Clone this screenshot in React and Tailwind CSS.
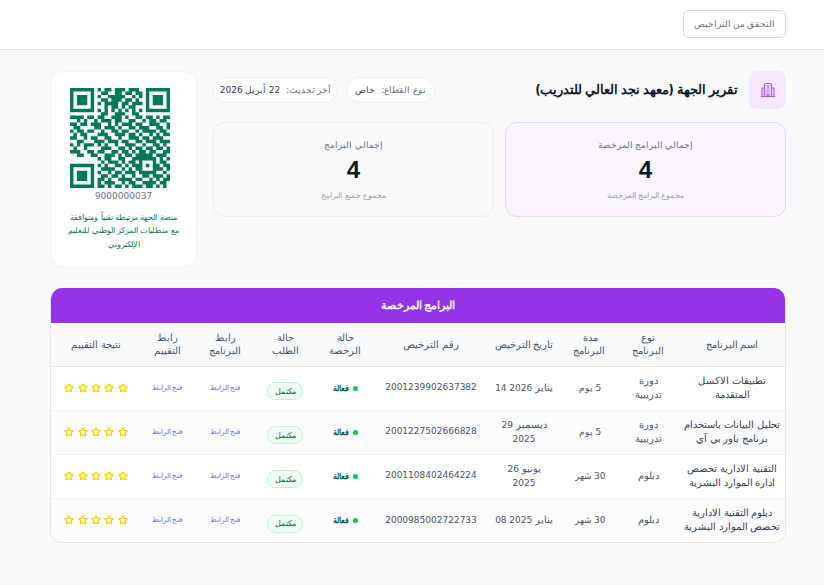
import { Star } from 'lucide-react';

const qrRows = [
    '00000000101101110111000000000',
    '00000000011001101101100000000',
    '00000000100111110010100000000',
    '00000000011011101101000000000',
    '00000000101111011011100000000',
    '00000000001011010110000000000',
    '00000000101010101010100000000',
    '00000000011001110011000000000',
    '11110110110011101001101101011',
    '00101001011101100110010110110',
    '11011011100101011101100111001',
    '01100001101110100110111001101',
    '10110110010011011001011110110',
    '01011000111001110110100101011',
    '11001011001100100111011011100',
    '00110001110111011001101110111',
    '10101110101001001110010011010',
    '01001000011100110101101101101',
    '11100110110011011010110110011',
    '00110011001110101101111101110',
    '00000000101100110011111110101',
    '00000000010111010110100010110',
    '00000000101001101011101011011',
    '00000000011110010101100011101',
    '00000000100101101110111110010',
    '00000000011011010010011011101',
    '00000000110100111101100101011',
    '00000000101110010110011110110',
    '00000000110101101011101101010',
];

const finder = (x, y) =>
    `M${x} ${y}h7v7h-7zM${x + 1} ${y + 1}v5h5v-5zM${x + 2} ${y + 2}h3v3h-3z`;

function QrCode() {
    let d = finder(0, 0) + finder(22, 0) + finder(0, 22);
    qrRows.forEach((row, y) => {
        row.split('').forEach((c, x) => {
            if (c === '1') d += `M${x} ${y}h1v1h-1z`;
        });
    });
    return (
        <svg viewBox="0 0 29 29" className="w-[100px] h-[100px] mr-[8px] shrink-0" fillRule="evenodd">
            <path d={d} fill="#047857" />
        </svg>
    );
}

// digits sit in a wider face than the arabic text
function Txt({ children }) {
    return children.split(/(\d+)/).map((part, i) =>
        /\d/.test(part) ? (
            <span key={i} className="font-['DejaVu_Sans',sans-serif] text-[9px]">{part}</span>
        ) : (
            part
        )
    );
}

const programs = [
    {
        name: 'تطبيقات الاكسل المتقدمة',
        type: 'دورة تدريبية',
        duration: '5 يوم',
        date: 'يناير 2026 14',
        number: '2001239902637382',
    },
    {
        name: 'تحليل البيانات باستخدام برنامج باور بي آي',
        type: 'دورة تدريبية',
        duration: '5 يوم',
        date: 'ديسمبر 29\n2025',
        number: '2001227502666828',
    },
    {
        name: 'التقنية الادارية تخصص ادارة الموارد البشرية',
        type: 'دبلوم',
        duration: '30 شهر',
        date: 'يونيو 26\n2025',
        number: '2001108402464224',
    },
    {
        name: 'دبلوم التقنية الادارية تخصص الموارد البشرية',
        type: 'دبلوم',
        duration: '30 شهر',
        date: 'يناير 2025 08',
        number: '2000985002722733',
    },
];

const headers = [
    ['اسم البرنامج', 'w-[106px] px-3'],
    ['نوع البرنامج', 'w-[62px] px-3'],
    ['مدة البرنامج', 'w-[54px] px-3'],
    ['تاريخ الترخيص', 'w-[78px] px-1'],
    ['رقم الترخيص', 'w-[108px] px-3'],
    ['حالة الرخصة', 'w-[64px] px-3'],
    ['حالة الطلب', 'w-[56px] px-3'],
    ['رابط البرنامج', 'w-[64px] px-3'],
    ['رابط التقييم', 'w-[52px] px-3'],
    ['نتيجة التقييم', 'w-[90px] px-3'],
];

function StatCard({ title, note, purple }) {
    return (
        <div
            className={`flex-1 h-[95px] rounded-xl border flex flex-col items-center pt-[15px] ${
                purple ? 'bg-[#faf5ff] border-[#e9d5ff]' : 'bg-[#f9fafb] border-[#eceef2]'
            }`}
        >
            <div className="text-[8.5px] leading-[14px] text-gray-500">{title}</div>
            <div className="text-[24px] leading-[32px] font-bold text-gray-900 font-['Liberation_Sans',sans-serif] mt-[2px]">4</div>
            <div className="text-[7.5px] leading-[12px] text-gray-400 mt-[4px]">{note}</div>
        </div>
    );
}

function App() {
    return (
        <div dir="rtl" className="min-h-screen bg-[#f9fafb] font-['Inter',sans-serif]">
            <div className="h-[50px] bg-white border-b border-[#e5e7eb] flex items-start pt-[10px] pr-[38px]">
                <button className="w-[103px] h-[28px] border border-gray-300 rounded-md text-[8.5px] text-gray-500 bg-white">
                    التحقق من التراخيص
                </button>
            </div>

            <div className="pr-[38px] pl-[50px] pt-[21px]">
                <div className="flex gap-4">
                    <div className="flex-1 min-w-0">
                        <div className="flex items-center justify-between h-[38px] mb-[13px]">
                            <div className="flex items-center gap-[11px]">
                                <div className="w-[37px] h-[38px] rounded-lg bg-[#f3e8ff] flex items-center justify-center">
                                    <svg viewBox="0 0 16 16" className="w-[16px] h-[16px]" fill="none" stroke="#a855f7" strokeWidth="1.2">
                                        <path d="M4.5 14V2.5L6 1.5h4l1.5 1V14" />
                                        <path d="M4.5 6H2v8M11.5 6H14v8M.8 14.5h14.4" />
                                        <path d="M6.5 4h3M6.5 6h3M6.5 8h3M6.5 10h3M7 14v-2h2v2" />
                                    </svg>
                                </div>
                                <h1 className="text-[12.8px] font-bold text-gray-900">تقرير الجهة (معهد نجد العالي للتدريب)</h1>
                            </div>
                            <div className="flex gap-2">
                                <div className="h-[26px] w-[89px] rounded-full bg-white border border-[#eef0f3] flex items-center justify-center gap-[6px] text-[9px]">
                                    <span className="text-gray-500">نوع القطاع:</span>
                                    <span className="text-gray-700">خاص</span>
                                </div>
                                <div className="h-[26px] w-[125px] rounded-full bg-white border border-[#eef0f3] flex items-center justify-center gap-[6px] text-[9px]">
                                    <span className="text-gray-500">آخر تحديث:</span>
                                    <span className="text-gray-700"><Txt>22 أبريل 2026</Txt></span>
                                </div>
                            </div>
                        </div>
                        <div className="flex gap-[11px]">
                            <StatCard title="إجمالي البرامج المرخصة" note="مجموع البرامج المرخصة" purple />
                            <StatCard title="إجمالي البرامج" note="مجموع جميع البرامج" />
                        </div>
                    </div>

                    <div className="w-[147px] h-[196px] bg-white rounded-xl border border-gray-100 flex flex-col items-center pt-[16px] px-4">
                        <QrCode />
                        <div className="text-[9px] leading-[14px] text-gray-500 mt-[1px] font-['DejaVu_Sans',sans-serif]">9000000037</div>
                        <p className="text-[8.2px] leading-[13.3px] text-emerald-700 text-center mt-[8px]">
                            منصة الجهة مرتبطة تقنياً ومتوافقة مع متطلبات المركز الوطني للتعليم الإلكتروني
                        </p>
                    </div>
                </div>

                <div className="mt-[21px] w-[736px] rounded-xl border border-t-0 border-gray-200 bg-white overflow-hidden">
                    <div className="h-[35px] bg-[#9333ea] text-white text-[11px] font-bold flex items-center justify-center">
                        البرامج المرخصة
                    </div>
                    <table className="w-full table-fixed text-center">
                        <thead>
                            <tr className="h-[43px] bg-[#f9fafb] border-b border-gray-200">
                                {headers.map(([label, width]) => (
                                    <th key={label} className={`${width} font-normal text-[9.5px] leading-[13px] text-gray-600`}>
                                        {label}
                                    </th>
                                ))}
                            </tr>
                        </thead>
                        <tbody>
                            {programs.map((p, i) => (
                                <tr key={p.number} className={`h-[44px] border-b border-gray-100 last:border-b-0 ${i % 2 ? 'bg-[#fcfcfc]' : 'bg-white'}`}>
                                    <td className="px-1 text-[9.5px] leading-[14px] text-gray-700">{p.name}</td>
                                    <td className="px-3 text-[9.5px] leading-[14px] text-gray-600">{p.type}</td>
                                    <td className="px-1 text-[9px] leading-[14px] text-gray-600"><Txt>{p.duration}</Txt></td>
                                    <td className="px-2 text-[9.5px] leading-[14px] text-gray-600 whitespace-pre-line"><Txt>{p.date}</Txt></td>
                                    <td className="px-1 text-[9px] text-gray-600 font-['DejaVu_Sans',sans-serif]">{p.number}</td>
                                    <td className="px-1">
                                        <div className="flex items-center justify-center gap-1 text-[8px] font-bold text-emerald-800">
                                            <span className="w-[5px] h-[5px] rounded-full bg-green-500" />
                                            <span>فعالة</span>
                                        </div>
                                    </td>
                                    <td className="px-1">
                                        <span className="inline-flex items-center justify-center w-[36px] h-[18px] rounded-full bg-green-50 border border-green-200 text-[7.5px] font-medium text-emerald-800">
                                            مكتمل
                                        </span>
                                    </td>
                                    <td className="px-1 text-[7px] text-indigo-500">فتح الرابط</td>
                                    <td className="px-1 text-[7px] text-indigo-500">فتح الرابط</td>
                                    <td className="px-1">
                                        <div className="flex items-center justify-center gap-[3.3px]">
                                            {[0, 1, 2, 3, 4].map((n) => (
                                                <Star key={n} size={10} strokeWidth={2.5} className="text-yellow-400 fill-yellow-100" />
                                            ))}
                                        </div>
                                    </td>
                                </tr>
                            ))}
                        </tbody>
                    </table>
                </div>
            </div>
        </div>
    );
}

export default App;
